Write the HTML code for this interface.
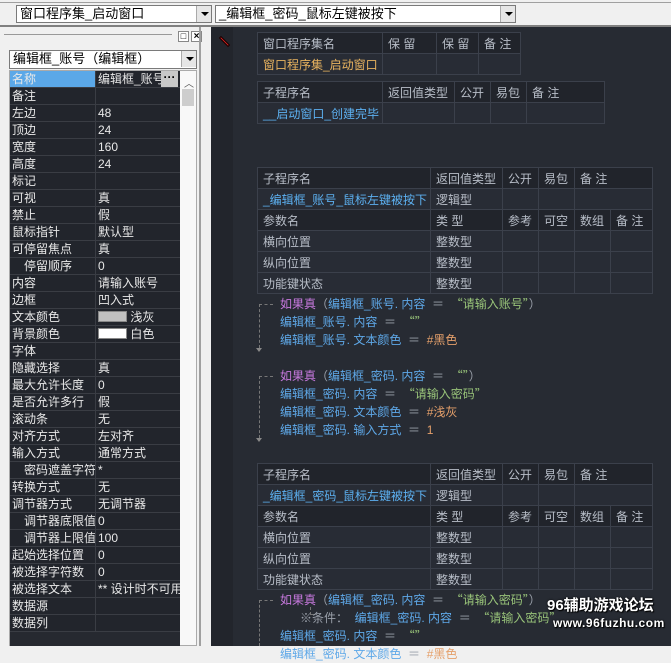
<!DOCTYPE html>
<html><head><meta charset="utf-8"><style>
*{margin:0;padding:0;box-sizing:border-box}
body{width:671px;height:646px;overflow:hidden;background:#f0f0f0;position:relative;font-family:"Liberation Sans","Noto Sans CJK SC","WenQuanYi Zen Hei",sans-serif;font-size:12px}
.a{position:absolute}
.combo{position:absolute;background:#fff;border:1px solid #7a7a7a;height:18px;line-height:16px;padding-left:3px;font-size:13px;color:#000;white-space:nowrap;overflow:hidden}
.dd{position:absolute;right:0;top:0;width:15px;height:16px;background:#e6e6e6;border-left:1px solid #aaa}
.dd:after{content:"";position:absolute;left:4px;top:6px;border-left:4px solid transparent;border-right:4px solid transparent;border-top:4px solid #000}
.pg{position:absolute;left:10px;top:71px;width:170px;background:#22252c}
.pr{height:17px;border-bottom:1px solid #3a3d44;display:flex;color:#e8e8e8;line-height:16px;white-space:nowrap;overflow:hidden}
.pr .n{width:86px;border-right:1px solid #3a3d44;padding-left:2px;overflow:hidden}
.pr .v{width:84px;padding-left:2px;overflow:hidden}
.ind{padding-left:14px!important}
table{position:absolute;border-collapse:collapse;table-layout:fixed}
td{border:1px solid #3b404b;height:21px;padding:0 5px;color:#b8bec8;white-space:nowrap;overflow:hidden;font-size:12px;background:#282c35}
td.h{background:#21242b}
.b{color:#5cb0f0}.o{color:#e8b35f}
.code{position:absolute;left:280px;font-size:12px;line-height:18px;white-space:pre;color:#5ea8e8;font-family:"Liberation Sans","Noto Sans CJK SC",sans-serif}
.q{font-family:"Noto Sans CJK SC",sans-serif}
.k{color:#c678dd}.s{color:#98c379}.n2{color:#e5a06b}.g{color:#9aa0aa}
.br{position:absolute;left:259px;border-left:1px dashed #777;width:14px;border-top:1px dashed #777}
.ar{position:absolute;left:256px;border-left:3px solid transparent;border-right:3px solid transparent;border-top:4px solid #888}
</style></head><body>
<div class="a" style="left:0;top:2px;width:671px;height:1px;background:#a0a0a0"></div>
<div class="combo" style="left:16px;top:5px;width:196px">窗口程序集_启动窗口<div class="dd"></div></div>
<div class="combo" style="left:215px;top:5px;width:301px">_编辑框_密码_鼠标左键被按下<div class="dd"></div></div>
<div class="a" style="left:0;top:25px;width:671px;height:2px;background:#808080"></div>
<div class="a" style="left:0;top:27px;width:207px;height:619px;background:#f0f0f0"></div>
<div class="a" style="left:4px;top:34px;width:168px;height:1px;background:#999"></div>
<div class="a" style="left:178px;top:31px;width:11px;height:11px;border:1px solid #888;background:#fff;font-size:9px;line-height:8px;text-align:center">□</div>
<div class="a" style="left:191px;top:31px;width:11px;height:11px;border:1px solid #888;background:#fff;font-size:10px;line-height:9px;text-align:center;font-weight:bold">×</div>
<div class="combo" style="left:9px;top:50px;width:188px;height:19px">编辑框_账号（编辑框）<div class="dd"></div></div>
<div class="a" style="left:9px;top:70px;width:188px;height:576px;background:#f8f8f8;border:1px solid #aaa"></div>
<div class="a" style="left:182px;top:89px;width:12px;height:17px;background:#cdcdcd"></div>
<div class="a" style="left:184px;top:75px;font-size:10px;color:#555">︿</div>
<div class="a" style="left:10px;top:71px;width:170px;height:575px;background:#262930"></div>
<div class="pg">
<div class="pr"><div class="n" style="background:#5ba8e8">名称</div><div class="v">编辑框_账号<span style="position:absolute;left:151px;top:0;width:17px;height:16px;background:#c8c8c8;color:#000;text-align:center;line-height:12px;font-weight:bold">···</span></div></div>
<div class="pr"><div class="n">备注</div><div class="v"></div></div>
<div class="pr"><div class="n">左边</div><div class="v">48</div></div>
<div class="pr"><div class="n">顶边</div><div class="v">24</div></div>
<div class="pr"><div class="n">宽度</div><div class="v">160</div></div>
<div class="pr"><div class="n">高度</div><div class="v">24</div></div>
<div class="pr"><div class="n">标记</div><div class="v"></div></div>
<div class="pr"><div class="n">可视</div><div class="v">真</div></div>
<div class="pr"><div class="n">禁止</div><div class="v">假</div></div>
<div class="pr"><div class="n">鼠标指针</div><div class="v">默认型</div></div>
<div class="pr"><div class="n">可停留焦点</div><div class="v">真</div></div>
<div class="pr"><div class="n ind">停留顺序</div><div class="v">0</div></div>
<div class="pr"><div class="n">内容</div><div class="v">请输入账号</div></div>
<div class="pr"><div class="n">边框</div><div class="v">凹入式</div></div>
<div class="pr"><div class="n">文本颜色</div><div class="v"><span style="display:inline-block;width:29px;height:11px;background:#c0c0c0;border:1px solid #888;vertical-align:-1px"></span> 浅灰</div></div>
<div class="pr"><div class="n">背景颜色</div><div class="v"><span style="display:inline-block;width:29px;height:11px;background:#fff;border:1px solid #888;vertical-align:-1px"></span> 白色</div></div>
<div class="pr"><div class="n">字体</div><div class="v"></div></div>
<div class="pr"><div class="n">隐藏选择</div><div class="v">真</div></div>
<div class="pr"><div class="n">最大允许长度</div><div class="v">0</div></div>
<div class="pr"><div class="n">是否允许多行</div><div class="v">假</div></div>
<div class="pr"><div class="n">滚动条</div><div class="v">无</div></div>
<div class="pr"><div class="n">对齐方式</div><div class="v">左对齐</div></div>
<div class="pr"><div class="n">输入方式</div><div class="v">通常方式</div></div>
<div class="pr"><div class="n ind">密码遮盖字符</div><div class="v">*</div></div>
<div class="pr"><div class="n">转换方式</div><div class="v">无</div></div>
<div class="pr"><div class="n">调节器方式</div><div class="v">无调节器</div></div>
<div class="pr"><div class="n ind">调节器底限值</div><div class="v">0</div></div>
<div class="pr"><div class="n ind">调节器上限值</div><div class="v">100</div></div>
<div class="pr"><div class="n">起始选择位置</div><div class="v">0</div></div>
<div class="pr"><div class="n">被选择字符数</div><div class="v">0</div></div>
<div class="pr"><div class="n">被选择文本</div><div class="v">** 设计时不可用</div></div>
<div class="pr"><div class="n">数据源</div><div class="v"></div></div>
<div class="pr"><div class="n">数据列</div><div class="v"></div></div>
</div>
<div class="a" style="left:199px;top:27px;width:2px;height:619px;background:#a0a0a0"></div>
<div class="a" style="left:211px;top:27px;width:460px;height:619px;background:#272b33"></div>
<div class="a" style="left:211px;top:27px;width:22px;height:619px;background:#22252c"></div>
<div class="a" style="left:218px;top:40px;width:13px;height:3px;background:#d02020;transform:rotate(45deg);border:1px solid #000"></div>

<table style="left:257px;top:32px;width:263px"><colgroup><col style="width:125px"><col style="width:54px"><col style="width:42px"><col style="width:42px"></colgroup>
<tr><td class="h">窗口程序集名</td><td class="h">保 留</td><td class="h">保 留</td><td class="h">备 注</td></tr>
<tr><td class="o">窗口程序集_启动窗口</td><td></td><td></td><td></td></tr></table>

<table style="left:257px;top:81px;width:347px"><colgroup><col style="width:125px"><col style="width:72px"><col style="width:36px"><col style="width:36px"><col style="width:78px"></colgroup>
<tr><td class="h">子程序名</td><td class="h">返回值类型</td><td class="h">公开</td><td class="h">易包</td><td class="h">备 注</td></tr>
<tr><td class="b">__启动窗口_创建完毕</td><td></td><td></td><td></td><td></td></tr></table>

<table style="left:257px;top:167px;width:395px"><colgroup><col style="width:173px"><col style="width:72px"><col style="width:36px"><col style="width:36px"><col style="width:36px"><col style="width:42px"></colgroup>
<tr><td class="h">子程序名</td><td class="h">返回值类型</td><td class="h">公开</td><td class="h">易包</td><td class="h" colspan="2">备 注</td></tr>
<tr><td class="b">_编辑框_账号_鼠标左键被按下</td><td>逻辑型</td><td></td><td></td><td colspan="2"></td></tr>
<tr><td class="h">参数名</td><td class="h">类 型</td><td class="h">参考</td><td class="h">可空</td><td class="h">数组</td><td class="h">备 注</td></tr>
<tr><td>横向位置</td><td>整数型</td><td></td><td></td><td></td><td></td></tr>
<tr><td>纵向位置</td><td>整数型</td><td></td><td></td><td></td><td></td></tr>
<tr><td>功能键状态</td><td>整数型</td><td></td><td></td><td></td><td></td></tr></table>

<div class="br" style="top:304px;height:44px"></div><div class="ar" style="top:348px"></div>
<div class="code" style="top:295px"><span class="k">如果真</span><span class="g q">（</span>编辑框_账号. 内容  <span class="g">＝</span>  <span class="s q">“请输入账号”</span><span class="g q">）</span>
编辑框_账号. 内容  <span class="g">＝</span>  <span class="s q">“”</span>
编辑框_账号. 文本颜色  <span class="g">＝</span>  <span class="n2">#黑色</span></div>

<div class="br" style="top:376px;height:62px"></div><div class="ar" style="top:438px"></div>
<div class="code" style="top:367px"><span class="k">如果真</span><span class="g q">（</span>编辑框_密码. 内容  <span class="g">＝</span>  <span class="s q">“”</span><span class="g q">）</span>
编辑框_密码. 内容  <span class="g">＝</span>  <span class="s q">“请输入密码”</span>
编辑框_密码. 文本颜色  <span class="g">＝</span>  <span class="n2">#浅灰</span>
编辑框_密码. 输入方式  <span class="g">＝</span>  <span class="n2">1</span></div>

<table style="left:257px;top:463px;width:395px"><colgroup><col style="width:173px"><col style="width:72px"><col style="width:36px"><col style="width:36px"><col style="width:36px"><col style="width:42px"></colgroup>
<tr><td class="h">子程序名</td><td class="h">返回值类型</td><td class="h">公开</td><td class="h">易包</td><td class="h" colspan="2">备 注</td></tr>
<tr><td class="b">_编辑框_密码_鼠标左键被按下</td><td>逻辑型</td><td></td><td></td><td colspan="2"></td></tr>
<tr><td class="h">参数名</td><td class="h">类 型</td><td class="h">参考</td><td class="h">可空</td><td class="h">数组</td><td class="h">备 注</td></tr>
<tr><td>横向位置</td><td>整数型</td><td></td><td></td><td></td><td></td></tr>
<tr><td>纵向位置</td><td>整数型</td><td></td><td></td><td></td><td></td></tr>
<tr><td>功能键状态</td><td>整数型</td><td></td><td></td><td></td><td></td></tr></table>

<div class="br" style="top:600px;height:46px"></div>
<div class="a" style="left:310px;top:607px;width:5px;height:8px;border-left:1px dashed #777;border-bottom:1px dashed #777"></div>
<div class="code" style="top:591px"><span class="k">如果真</span><span class="g q">（</span>编辑框_密码. 内容  <span class="g">＝</span>  <span class="s q">“请输入密码”</span><span class="g q">）</span>
<span class="g">      ※条件：</span>  编辑框_密码. 内容  <span class="g">＝</span>  <span class="s q">“请输入密码”</span>
编辑框_密码. 内容  <span class="g">＝</span>  <span class="s q">“”</span>
编辑框_密码. 文本颜色  <span class="g">＝</span>  <span class="n2">#黑色</span></div>

<div class="a" style="left:547px;top:594px;color:#fff;font-size:15px;font-weight:bold;text-shadow:0 0 2px #000,1px 1px 1px #000;white-space:nowrap">96辅助游戏论坛</div>
<div class="a" style="left:553px;top:616px;color:#fff;font-size:12px;font-weight:bold;text-shadow:0 0 2px #000,1px 1px 1px #000;white-space:nowrap;letter-spacing:0.5px">www.96fuzhu.com</div>
</body></html>
